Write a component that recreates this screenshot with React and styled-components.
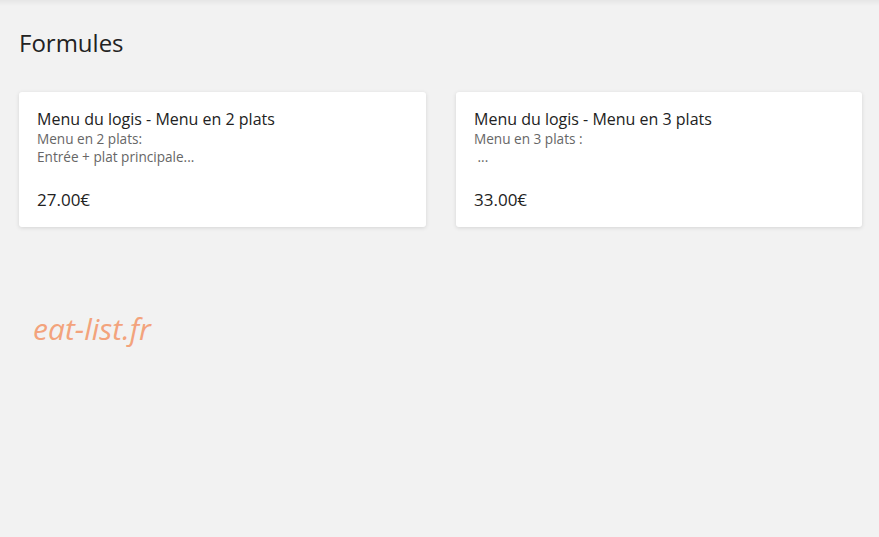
import styled, { createGlobalStyle } from "styled-components";

const GlobalStyle = createGlobalStyle`
  body {
    margin: 0;
    background: #f2f2f2;
    font-family: "Open Sans", "Liberation Sans", sans-serif;
  }
`;

const formules = [
  {
    title: "Menu du logis - Menu en 2 plats",
    lines: ["Menu en 2 plats:", "Entrée + plat principale..."],
    price: "27.00€",
  },
  {
    title: "Menu du logis - Menu en 3 plats",
    lines: ["Menu en 3 plats :", " ..."],
    price: "33.00€",
  },
];

export default function App() {
  return (
    <>
      <GlobalStyle />
      <Page>
        <TopShade />
        <Section>
          <Heading>Formules</Heading>
          <CardGrid>
            {formules.map((f) => (
              <Card key={f.title}>
                <CardTitle>{f.title}</CardTitle>
                <CardDesc>
                  {f.lines.map((l, i) => (
                    <DescLine key={i}>{l}</DescLine>
                  ))}
                </CardDesc>
                <Price>{f.price}</Price>
              </Card>
            ))}
          </CardGrid>
          <Watermark>eat-list.fr</Watermark>
        </Section>
      </Page>
    </>
  );
}

const Page = styled.div`
  min-height: 537px;
  background: #f2f2f2;
`;

const TopShade = styled.div`
  height: 6px;
  background: linear-gradient(#e6e6e6, #f2f2f2);
`;

const Section = styled.section`
  padding: 21px 17px 0 19px;
`;

const Heading = styled.h2`
  margin: 0 0 33px;
  font-size: 24px;
  font-weight: 400;
  line-height: 32px;
  color: #222;
`;

const CardGrid = styled.div`
  display: grid;
  grid-template-columns: 407px 406px;
  gap: 30px;
`;

const Card = styled.div`
  background: #fff;
  border-radius: 3px;
  box-shadow: 0 1px 4px rgba(0, 0, 0, 0.12);
  padding: 16px 18px 16px;
  height: 135px;
  box-sizing: border-box;
  display: flex;
  flex-direction: column;
`;

const CardTitle = styled.div`
  font-size: 16px;
  line-height: 22px;
  color: #222;
`;

const CardDesc = styled.div`
  font-size: 13.6px;
  line-height: 18px;
  color: #666;
  white-space: pre;
`;

const DescLine = styled.div``;

const Price = styled.div`
  margin-top: auto;
  font-size: 17px;
  line-height: 22px;
  color: #222;
`;

const Watermark = styled.div`
  margin: 83px 0 0 14px;
  font-size: 30px;
  font-style: italic;
  line-height: 38px;
  color: #f3a37c;
`;
